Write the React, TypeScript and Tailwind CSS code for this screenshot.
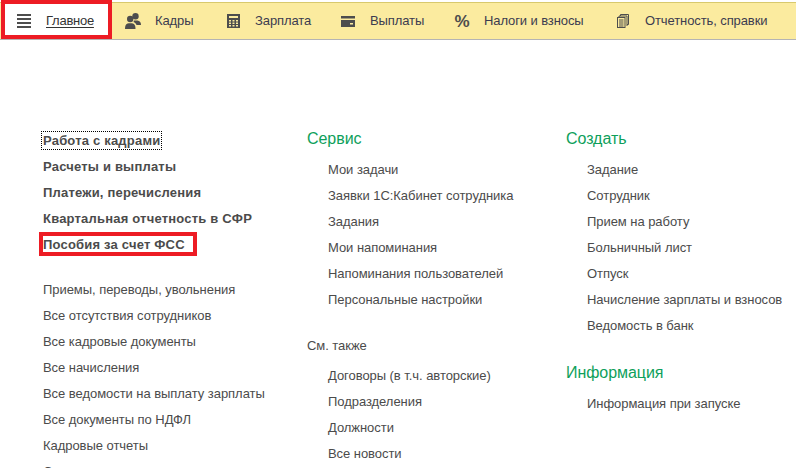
const font = "font-['Arial','Liberation_Sans',sans-serif]";

const navItems = [
  { label: "Кадры", icon: <PeopleIcon />, width: "w-[100px]" },
  { label: "Зарплата", icon: <CalcIcon />, width: "w-[115px]" },
  { label: "Выплаты", icon: <WalletIcon />, width: "w-[114px]" },
  { label: "Налоги и взносы", icon: <span className="text-[17px] font-bold leading-none text-[#4d4d4d]">%</span>, width: "w-[161px]" },
  { label: "Отчетность, справки", icon: <DocsIcon />, width: "" },
];

const boldLinks = ["Расчеты и выплаты", "Платежи, перечисления", "Квартальная отчетность в СФР"];
const leftLinks = [
  "Приемы, переводы, увольнения",
  "Все отсутствия сотрудников",
  "Все кадровые документы",
  "Все начисления",
  "Все ведомости на выплату зарплаты",
  "Все документы по НДФЛ",
  "Кадровые отчеты",
  "Справочники",
];
const serviceLinks = ["Мои задачи", "Заявки 1С:Кабинет сотрудника", "Задания", "Мои напоминания", "Напоминания пользователей", "Персональные настройки"];
const alsoLinks = ["Договоры (в т.ч. авторские)", "Подразделения", "Должности", "Все новости"];
const createLinks = ["Задание", "Сотрудник", "Прием на работу", "Больничный лист", "Отпуск", "Начисление зарплаты и взносов", "Ведомость в банк"];

function MenuIcon() {
  return (
    <svg width="14" height="14" viewBox="0 0 14 14" fill="#4d4d4d">
      <rect x="0" y="0" width="14" height="2" />
      <rect x="0" y="4" width="14" height="2" />
      <rect x="0" y="8" width="14" height="2" />
      <rect x="0" y="12" width="14" height="2" />
    </svg>
  );
}

function PeopleIcon() {
  return (
    <svg width="16" height="16" viewBox="0 0 16 16" fill="#4d4d4d">
      <circle cx="10.500" cy="3.200" r="3.200" />
      <path d="M9 7.500h3.500c2 .3 3.500 1.500 3.500 4.500h-4.500c-.5-1.500-1.500-2.500-3-3z" />
      <circle cx="5.200" cy="6" r="3.200" />
      <path d="M0 16c0-3 .6-4.800 2.500-5.500 1.500-.5 4-.5 5.500 0 1.900.7 2.500 2.500 2.500 5.500z" />
    </svg>
  );
}

function CalcIcon() {
  return (
    <svg width="13" height="14" viewBox="0 0 13 14">
      <rect width="13" height="14" fill="#4d4d4d" />
      <rect x="2" y="2" width="9" height="2" fill="#fbeb9f" />
      <g fill="#fbeb9f">
        <rect x="2" y="6" width="2" height="1.500" />
        <rect x="5.500" y="6" width="2" height="1.500" />
        <rect x="9" y="6" width="2" height="1.500" />
        <rect x="2" y="8.500" width="2" height="1.500" />
        <rect x="5.500" y="8.500" width="2" height="1.500" />
        <rect x="9" y="8.500" width="2" height="1.500" />
        <rect x="2" y="11" width="2" height="1.500" />
        <rect x="5.500" y="11" width="2" height="1.500" />
        <rect x="9" y="11" width="2" height="1.500" />
      </g>
    </svg>
  );
}

function WalletIcon() {
  return (
    <svg width="14" height="11" viewBox="0 0 14 11">
      <rect width="14" height="11" fill="#4d4d4d" />
      <rect x="0" y="2.500" width="14" height="1.500" fill="#fbeb9f" />
      <rect x="9" y="7" width="3" height="1.500" fill="#fbeb9f" />
    </svg>
  );
}

function DocsIcon() {
  return (
    <svg width="12" height="14" viewBox="0 0 12 14" fill="none" stroke="#4d4d4d" strokeWidth="1">
      <path d="M3.500 2V.500h8v10H10" />
      <path d="M2 3.500V2h8v10" />
      <rect x=".500" y="3.500" width="7.500" height="10" />
      <path d="M2 6h4.500M2 8h4.500M2 10h4.500M2 12h4.500" />
    </svg>
  );
}

function Heading({ children }: { children: string }) {
  return <div className="text-[16px] leading-[20px] text-[#0e9f5b]">{children}</div>;
}

function LinkList({ links }: { links: string[] }) {
  return (
    <div className="flex flex-col">
      {links.map((link) => (
        <div key={link} className="h-[26px] leading-[26px] whitespace-nowrap">
          {link}
        </div>
      ))}
    </div>
  );
}

export default function App() {
  return (
    <div className={`${font} h-[468px] w-[796px] overflow-hidden bg-white text-[13px] tracking-[-0.05px] text-[#4b4b4b]`}>
      {/* Top panel */}
      <div className="mt-[2px] flex h-[38px] items-center border-y border-t-[#d8c96d] border-b-[#b4b4b4] bg-[#fbeb9f]">
        <div className="mt-[-3px] ml-[1px] flex h-[39px] w-[111px] shrink-0 items-center self-start border-4 border-[#ed1c24] bg-white pt-[3px] pl-[12px]">
          <MenuIcon />
          <span className="ml-[15px] tracking-[-0.25px] text-[#333] underline underline-offset-2">Главное</span>
        </div>
        <div className="flex items-center pl-[6px] tracking-[-0.1px]">
          {navItems.map((item) => (
            <div key={item.label} className={`flex items-center ${item.width}`}>
              <div className="flex w-[30px] justify-center">{item.icon}</div>
              <span className="ml-[7px] whitespace-nowrap text-[#3c3c50]">{item.label}</span>
            </div>
          ))}
        </div>
      </div>

      {/* Sections */}
      <div className="flex pt-[89px]">
        <div className="mt-[-2px] w-[307px] shrink-0 pl-[39px]">
          <div className="font-bold tracking-[0.2px]">
            <div className="flex h-[26px] items-center">
              <span className="ml-[2px] inline-block border border-dotted border-black px-px leading-[17px]">Работа с кадрами</span>
            </div>
            {boldLinks.map((link) => (
              <div key={link} className="h-[26px] pl-[4px] leading-[28px]">
                {link}
              </div>
            ))}
            <div className="mt-[1px] h-[24px] w-[158px] border-4 border-[#ed1c24] bg-white leading-[18px] whitespace-nowrap">
              Пособия за счет ФСС
            </div>
          </div>
          <div className="mt-[21px] pl-[4px]">
            <LinkList links={leftLinks} />
          </div>
        </div>

        <div className="w-[259px] shrink-0">
          <Heading>Сервис</Heading>
          <div className="mt-[8px] pl-[21px]">
            <LinkList links={serviceLinks} />
          </div>
          <div className="mt-[23px] leading-[20px]">См. также</div>
          <div className="mt-[7px] pl-[21px]">
            <LinkList links={alsoLinks} />
          </div>
        </div>

        <div className="flex-1">
          <Heading>Создать</Heading>
          <div className="mt-[8px] pl-[21px]">
            <LinkList links={createLinks} />
          </div>
          <div className="mt-[24px]">
            <Heading>Информация</Heading>
          </div>
          <div className="mt-[8px] pl-[21px]">
            <LinkList links={["Информация при запуске"]} />
          </div>
        </div>
      </div>
    </div>
  );
}
